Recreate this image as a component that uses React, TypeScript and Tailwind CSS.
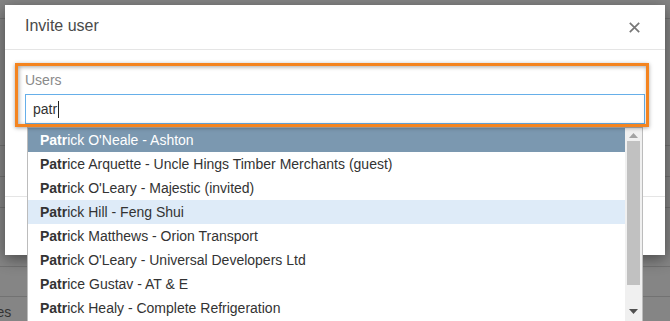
import React from 'react';

const users = [
  { rest: "ick O'Neale - Ashton" },
  { rest: 'ice Arquette - Uncle Hings Timber Merchants (guest)' },
  { rest: "ick O'Leary - Majestic (invited)" },
  { rest: 'ick Hill - Feng Shui' },
  { rest: 'ick Matthews - Orion Transport' },
  { rest: "ick O'Leary - Universal Developers Ltd" },
  { rest: 'ice Gustav - AT & E' },
  { rest: 'ick Healy - Complete Refrigeration' },
  { rest: 'ick Doyle - Doyle & Sons' },
];

const CloseIcon = () => (
  <svg width="11" height="11" viewBox="0 0 11 11" className="block">
    <path d="M0.8 0.8 L10.2 10.2 M10.2 0.8 L0.8 10.2" stroke="#777" strokeWidth="1.7" />
  </svg>
);

const Scrollbar = () => (
  <div className="w-[17px] shrink-0 bg-[#f0f0f0] flex flex-col items-center">
    <div className="h-[12px] flex items-center justify-center pt-[2px]">
      <svg width="9" height="5" viewBox="0 0 9 5">
        <path d="M0 5 L4.5 0 L9 5 Z" fill="#a3a3a3" />
      </svg>
    </div>
    <div className="w-[13px] h-[144px] bg-[#c1c1c1] mt-[1px]" />
    <svg width="9" height="5" viewBox="0 0 9 5" className="mt-[24px]">
      <path d="M0 0 L9 0 L4.5 5 Z" fill="#505050" />
    </svg>
    <div className="h-[12px]" />
  </div>
);

export default function App() {
  return (
    <div className="relative w-[670px] h-[321px] overflow-hidden bg-[#858585] font-['Liberation_Sans',Arial,sans-serif]">
      {/* page behind the overlay */}
      <div className="flex flex-col">
        <div className="h-[19px] border-b border-[#727272]" />
        <div className="h-[127px] border-b border-[#727272]" />
        <div className="h-[31px] border-b border-[#727272]" />
        <div className="h-[31px] border-b border-[#727272]" />
        <div className="h-[59px] border-b border-[#727272]" />
        <div className="h-[30px] border-b border-[#727272]" />
        <div className="h-[30px] flex items-center overflow-hidden">
          <span className="-ml-[44px] text-[14px] text-[#333]">Activities</span>
        </div>
      </div>

      {/* modal */}
      <div className="absolute left-[5px] top-[5px] w-[660px] h-[250px] bg-white shadow-[0_4px_14px_rgba(0,0,0,0.45)] flex flex-col">
        <div className="h-[45px] border-b border-[#e5e5e5] flex items-center justify-between pl-[20px] pr-[25px] shrink-0">
          <h4 className="text-[16px] text-[#4a4a4a] pb-[2px]">Invite user</h4>
          <CloseIcon />
        </div>
        <div className="h-[146px] px-[20px] pt-[20px] shrink-0">
          <label className="block h-[20px] leading-[20px] text-[14px] text-[#8a8a8a]">Users</label>
          <div className="relative mt-[4px]">
            <div className="h-[30px] border border-[#66afe9] flex items-center px-[7px] text-[14px] text-[#333]">
              patr
              <span className="w-px h-[17px] bg-[#222] ml-[1px]" />
            </div>
            <div className="absolute left-[2px] right-[2px] top-[33px] border border-[#bcbcbc] bg-white flex z-10">
              <ul className="flex-1">
                {users.map((u, i) => (
                  <li
                    key={i}
                    className={`h-[24px] leading-[24px] pl-[12px] text-[14px] whitespace-nowrap ${
                      i === 0 ? 'bg-[#7b98b0] text-white' : i === 3 ? 'bg-[#deebf8] text-[#333]' : 'text-[#333]'
                    }`}
                  >
                    <b>Patr</b>
                    {u.rest}
                  </li>
                ))}
              </ul>
              <Scrollbar />
            </div>
          </div>
        </div>
        <div className="flex-1 border-t border-[#e5e5e5]" />
      </div>

      {/* highlight annotation */}
      <div className="absolute left-[15px] top-[63px] w-[634px] h-[64px] border-[3px] border-[#f4841f] shadow-[0_1px_4px_rgba(0,0,0,0.35),inset_1px_1px_4px_rgba(0,0,0,0.35)] pointer-events-none z-20" />
    </div>
  );
}
